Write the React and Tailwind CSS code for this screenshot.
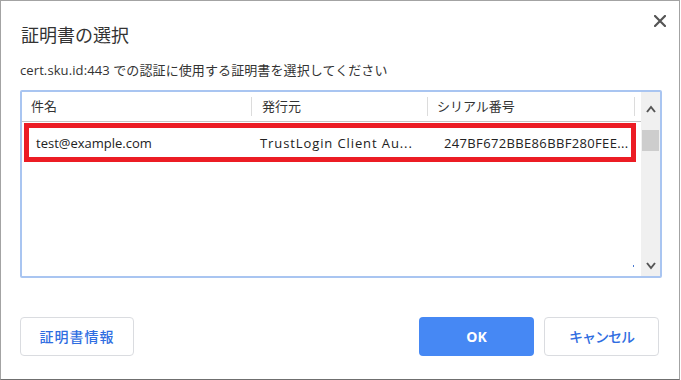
import React from 'react';

const FONT = { fontFamily: '"Open Sans", "Noto Sans CJK JP", sans-serif' };

// Close icon in the dialog header
const CloseIcon = () => (
  <svg width="12" height="12" viewBox="0 0 12 12" className="block">
    <path d="M1 1 L11 11 M11 1 L1 11" stroke="#555" strokeWidth="2.2" strokeLinecap="square" />
  </svg>
);

const Chevron = ({ down }) => (
  <svg width="10" height="8" viewBox="0 0 10 8" className="block">
    {down ? (
      <path d="M1 1 L5 6 L9 1" stroke="#555" strokeWidth="2" fill="none" />
    ) : (
      <path d="M1 7 L5 2 L9 7" stroke="#555" strokeWidth="2" fill="none" />
    )}
  </svg>
);

const App = () => {
  return (
    <div
      className="w-[680px] h-[380px] bg-white border border-[#a3a3a3] border-b-[#6f6f6f] flex flex-col text-[#333]"
      style={FONT}
    >
      {/* Header */}
      <div className="flex justify-between items-start pl-[20px] pr-[13px] pt-[22px] h-[60px]">
        <h1 className="text-[18px] leading-[24px] font-normal text-[#333]">証明書の選択</h1>
        <button className="-mt-[8px] p-0">
          <CloseIcon />
        </button>
      </div>

      <p className="pl-[19px] text-[13px] leading-[18px] text-[#333] tracking-[0.1px]">
        cert.sku.id:443 での認証に使用する証明書を選択してください
      </p>

      {/* Certificate list */}
      <div className="ml-[19px] mt-[11px] w-[642px] h-[188px] border-2 border-[#a9c5f1] rounded-[2px] flex">
        <div className="flex-1 flex flex-col">
          <div className="h-[30px] flex items-center border-b border-[#c4c4c4] text-[13px]">
            <div className="w-[230px] pl-[9px] border-r border-[#dcdcdc] h-[19px] leading-[19px]">件名</div>
            <div className="w-[176px] pl-[10px] border-r border-[#dcdcdc] h-[19px] leading-[19px]">発行元</div>
            <div className="w-[207px] pl-[9px] border-r border-[#dcdcdc] h-[19px] leading-[19px]">シリアル番号</div>
          </div>
          <div className="ml-[2px] mt-[1px] w-[612px] h-[39px] border-[5px] border-[#ec1c24] flex items-center text-[13px] text-[#222] pt-[2px]">
            <div className="w-[231px] pl-[7px] whitespace-nowrap">test@example.com</div>
            <div className="w-[184px] whitespace-nowrap tracking-[0.9px]">TrustLogin Client Au...</div>
            <div className="whitespace-nowrap tracking-[0.35px]">247BF672BBE86BBF280FEE...</div>
          </div>
          <div className="flex-1 flex items-end justify-end pr-[7px] pb-[9px]">
            <div className="w-[1px] h-[2px] bg-[#4a7bd0]" />
          </div>
        </div>
        <div className="w-[19px] bg-[#f0f0f0] flex flex-col items-center">
          <div className="h-[19px] flex items-center justify-center mt-[7px]">
            <Chevron />
          </div>
          <div className="w-[17px] h-[21px] bg-[#cdcdcd] mt-[12px]" />
          <div className="flex-1" />
          <div className="h-[19px] flex items-center justify-center mb-[1px]">
            <Chevron down />
          </div>
        </div>
      </div>

      {/* Footer buttons */}
      <div className="flex items-center pl-[19px] pr-[20px] mt-[39px]">
        <button className="w-[114px] h-[39px] border border-[#dadce0] rounded-[4px] text-[14px] font-medium text-[#2f6de1] tracking-[1px]">
          証明書情報
        </button>
        <div className="flex-1" />
        <button className="w-[115px] h-[39px] rounded-[4px] bg-[#4688f4] text-white text-[14px] font-bold">
          OK
        </button>
        <button className="ml-[10px] w-[115px] h-[39px] border border-[#dadce0] rounded-[4px] text-[14px] font-medium text-[#2f6de1] tracking-[-1px]">
          キャンセル
        </button>
      </div>
    </div>
  );
};

export default App;
